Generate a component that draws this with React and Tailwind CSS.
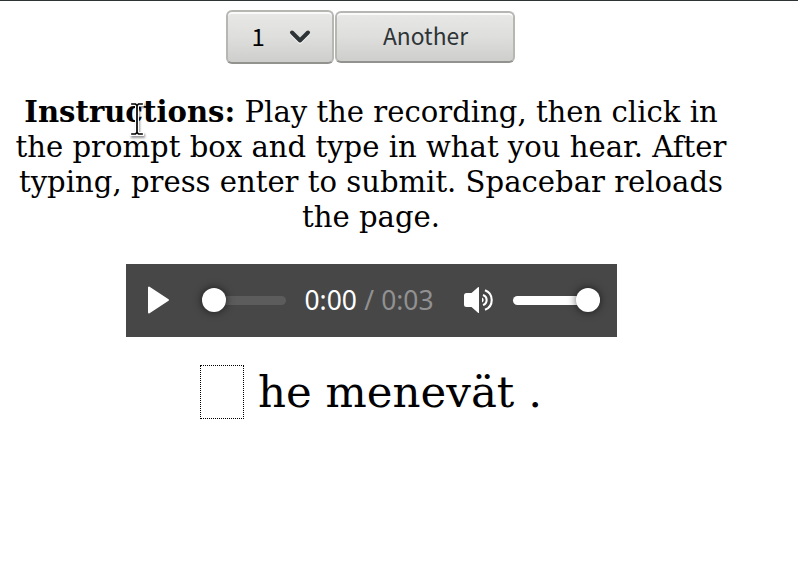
function Chevron() {
  return (
    <svg width="24" height="18" viewBox="0 0 24 18" fill="none" strokeLinecap="round" strokeLinejoin="round">
      <path d="M4 5.9 12 13.9 20 5.9" stroke="#f6f6f5" strokeWidth="4" />
      <path d="M4 4.5 12 12.5 20 4.5" stroke="#2e3436" strokeWidth="4" />
    </svg>
  );
}

function SpeakerIcon() {
  return (
    <svg className="mb-px ml-[30px] shrink-0" width="30" height="28" viewBox="0 0 30 28">
      <path d="M2.5 7H7.5L14 1.2Q15 .5 15 1.5V26.5Q15 27.5 14 26.8L7.5 21H2.5Q0 21 0 18.5V9.5Q0 7 2.5 7Z" fill="#fff" />
      <path d="M18 11.5A2.7 2.7 0 0 1 18 16.5Z" fill="#fff" />
      <path d="M19 8.9A5.4 5.4 0 0 1 19 19.1M21 4.2A10.5 10.5 0 0 1 21 23.8" fill="none" stroke="#fff" strokeWidth="2.1" />
    </svg>
  );
}

function TextCursor() {
  return (
    <svg className="absolute left-[128px] top-[98px] drop-shadow-[1px_2px_1px_rgba(0,0,0,0.4)]" width="18" height="40" viewBox="0 0 18 40" fill="none" strokeLinecap="square">
      <path d="M4 5H7M11 5H14M9 7V33M4 35H7M11 35H14" stroke="#fff" strokeWidth="4" />
      <path d="M4 5H7.5L9 6.5 10.5 5H14M9 7V33M4 35H7.5L9 33.5 10.5 35H14" stroke="#000" strokeWidth="1.7" />
    </svg>
  );
}

const buttonStyle =
  "box-border flex rounded-[6px] border-2 border-[#b6b6b3] border-b-[#92928f] bg-linear-to-b from-[#e8e8e7] via-[#dededc] to-[#cececc] shadow-[inset_0_2px_0_#fafafa]";

export default function App() {
  return (
    <main className="relative h-[580px] w-[798px] overflow-hidden border-t border-[#2e3436] bg-white font-['DejaVu_Serif',serif] text-black">
      <div className="flex w-[742px] flex-col items-center">
        <div className="mr-[2px] mt-[9px] flex h-[54px] w-[289px] items-center gap-px font-['Noto_Sans_CJK_SC',sans-serif] text-[23px]">
          <button className={`${buttonStyle} h-[54px] w-[108px] items-center pl-[24px]`}>
            <span className="w-[36px] pb-[3px] text-left text-[24px]">1</span>
            <Chevron />
          </button>
          <button className={`${buttonStyle} h-[52px] w-[180px] items-center justify-center pb-[2px] pl-[2px] text-[22.8px] text-[#2e3436]`}>
            Another
          </button>
        </div>
        <p className="mt-[31px] text-center text-[29.1px] leading-[35px] whitespace-nowrap">
          <b>Instructions:</b> Play the recording, then click in<br />
          the prompt box and type in what you hear. After<br />
          typing, press enter to submit. Spacebar reloads<br />
          the page.
        </p>
        <div className="mt-[29px] flex h-[73px] w-[491px] items-center bg-[#474747] pl-[21px] font-['Noto_Sans',sans-serif]">
          <svg className="mb-px shrink-0" width="23" height="28" viewBox="0 0 23 28">
            <path d="M2 1.5V26.5L21 14Z" fill="#fff" stroke="#fff" strokeWidth="2" strokeLinejoin="round" />
          </svg>
          <div className="ml-[32px] flex h-[9px] w-[84px] shrink-0 items-start rounded-full bg-[#5c5c5c]">
            <span className="-mt-2 size-6 rounded-full bg-white shadow-[0_0_8px_rgba(0,0,0,0.65)]" />
          </div>
          <div className="ml-[18px] flex w-[130px] shrink-0 pb-px pl-px text-[26.4px] leading-[36px] whitespace-nowrap text-white">
            <span className="w-[60px]">0:00</span>
            <span className="w-[17px] text-[#919191]">/</span>
            <span className="text-[#919191]">0:03</span>
          </div>
          <SpeakerIcon />
          <div className="ml-[19px] flex h-[9px] w-[87px] shrink-0 items-start justify-end rounded-full bg-white">
            <span className="-mt-2 size-6 rounded-full bg-white shadow-[0_0_8px_rgba(0,0,0,0.65)]" />
          </div>
        </div>
        <div className="mt-[28px] flex h-[54px] w-[342px] items-center text-[43.5px] leading-[54px] whitespace-nowrap">
          <span className="mr-[14px] h-[54px] w-[44px] shrink-0 border border-dotted border-black" />
          he menevät .
        </div>
      </div>
      <TextCursor />
    </main>
  );
}
